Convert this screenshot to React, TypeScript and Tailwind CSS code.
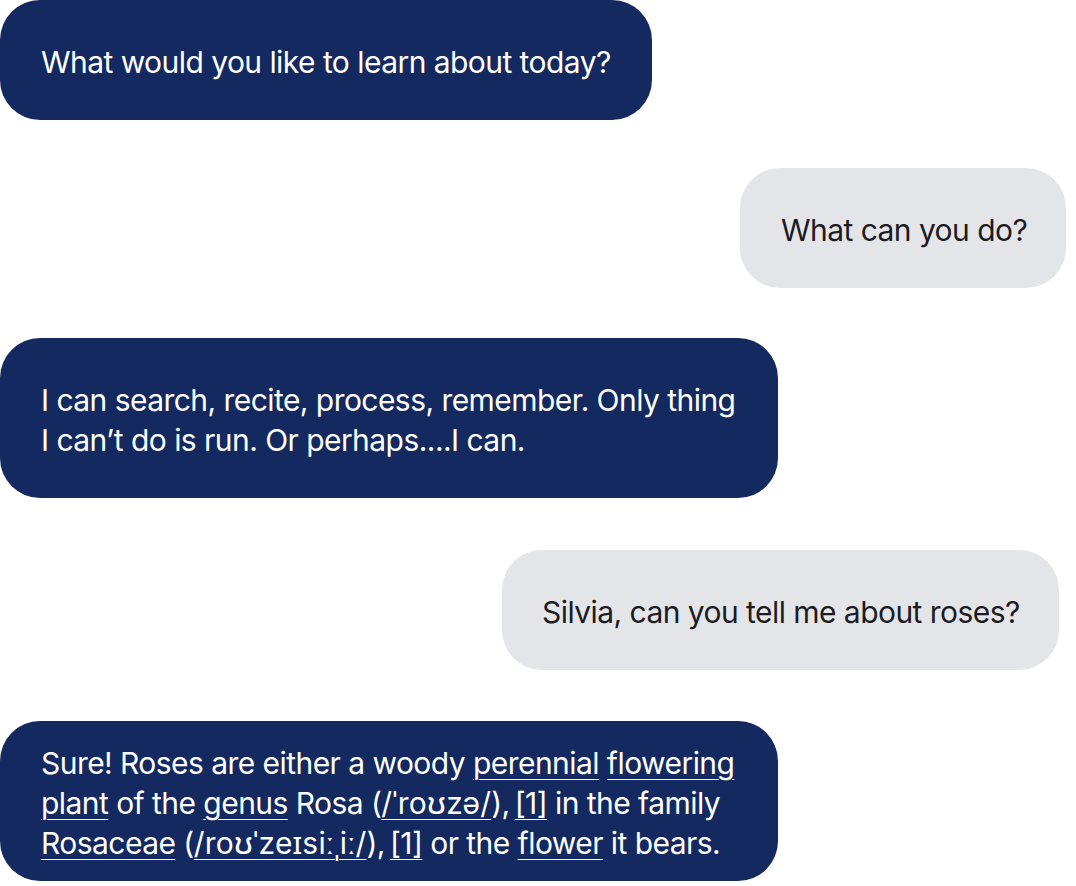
const font = { fontFamily: "Inter, 'Noto Sans', sans-serif" };

function U({ children, className = "" }: { children: React.ReactNode; className?: string }) {
  return <span className={`underline decoration-1 underline-offset-[5px] ${className}`}>{children}</span>;
}

export default function App() {
  return (
    <div className="w-[1076px] h-[886px] bg-white overflow-hidden pr-[10px]" style={font}>
      <div className="flex flex-col text-[30px] leading-[40px] tracking-[-0.55px]">
        <div className="self-start w-[652px] h-[120px] rounded-[40px] bg-[#13295f] text-white flex items-center pl-[41px] pt-[3px]">
          What would you like to learn about today?
        </div>

        <div className="self-end mt-[48px] w-[326px] h-[120px] rounded-[40px] bg-[#e4e5e9] text-[#1c1b1f] flex items-center pl-[41px] pt-[3px]">
          What can you do?
        </div>

        <div className="self-start mt-[50px] w-[778px] h-[160px] rounded-[40px] bg-[#13295f] text-white flex items-center pl-[41px] pt-[3px]">
          <div>
            I can search, recite, process, remember. Only thing
            <br />
            I can’t do is run. Or perhaps....I can.
          </div>
        </div>

        <div className="self-end mt-[52px] mr-[7px] w-[557px] h-[120px] rounded-[40px] bg-[#e4e5e9] text-[#1c1b1f] flex items-center pl-[40px] pt-[3px]">
          Silvia, can you tell me about roses?
        </div>

        <div className="self-start mt-[51px] w-[778px] h-[160px] rounded-[40px] bg-[#13295f] text-white flex items-center pl-[41px] pt-[3px]">
          <div>
            Sure! Roses are either a woody <U>perennial</U> <U>flowering</U>
            <br />
            <U>plant</U> of the <U>genus</U> Rosa (<U className="tracking-[0.2px]">/ˈroʊzə/</U>),<U className="ml-[5px]">[1]</U> in the family
            <br />
            <U>Rosaceae</U> (<U className="tracking-[0.2px]">/roʊˈzeɪsiːˌiː/</U>),<U className="ml-[5px]">[1]</U> or the <U>flower</U> it bears.
          </div>
        </div>
      </div>
    </div>
  );
}
